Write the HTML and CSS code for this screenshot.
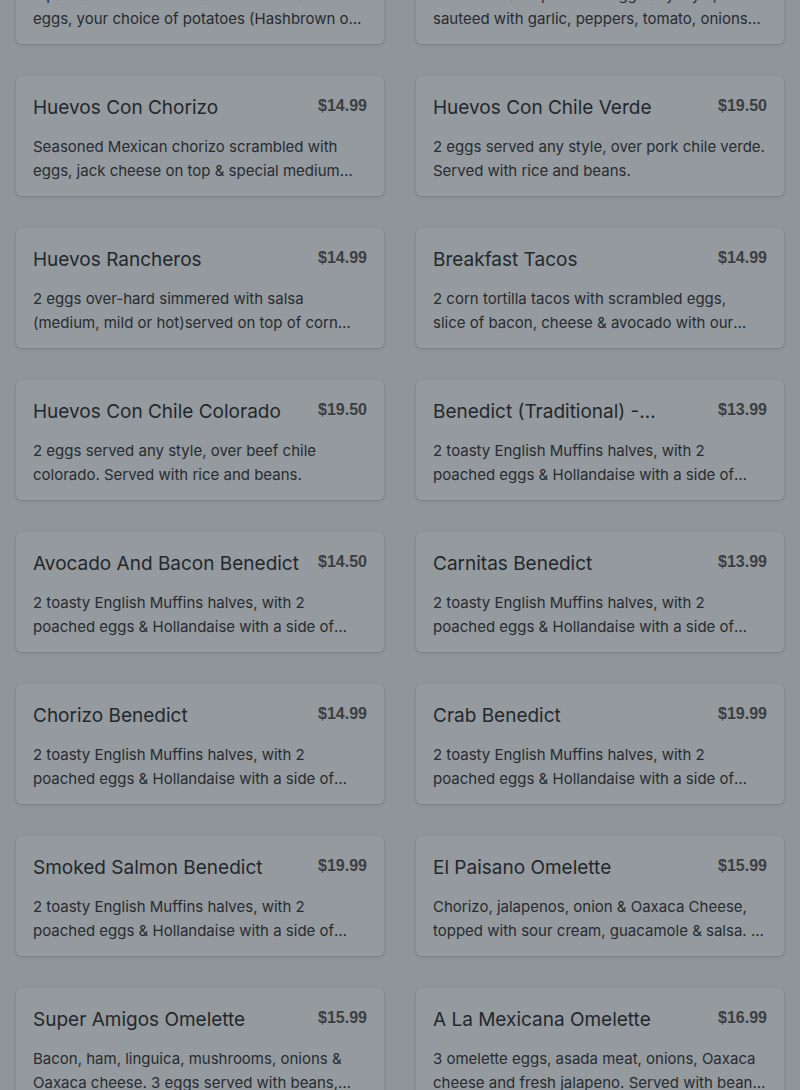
FILE: index.html
```html
<!DOCTYPE html>
<html lang="en">
<head>
    <meta charset="UTF-8">
    <meta name="viewport" content="width=device-width, initial-scale=1.0">
    <title>Breakfast Menu</title>
    <link rel="stylesheet" href="styles.css">
</head>
<body>
    <main class="menu">
        <div class="card">
            <div class="card-head">
                <h3 class="title">Breakfast Combo</h3>
                <span class="price">$13.99</span>
            </div>
            <p class="desc">2 pancakes or french toast with 2 scrambled eggs, your choice of potatoes (Hashbrown or home fries) and bacon or sausage.</p>
        </div>
        <div class="card">
            <div class="card-head">
                <h3 class="title">Chilaquiles</h3>
                <span class="price">$15.99</span>
            </div>
            <p class="desc">Corn tortilla chips with 2 eggs any style, sauteed with garlic, peppers, tomato, onions and our house salsa.</p>
        </div>

        <div class="card">
            <div class="card-head">
                <h3 class="title">Huevos Con Chorizo</h3>
                <span class="price">$14.99</span>
            </div>
            <p class="desc">Seasoned Mexican chorizo scrambled with eggs, jack cheese on top &amp; special medium salsa. Served with rice and beans.</p>
        </div>
        <div class="card">
            <div class="card-head">
                <h3 class="title">Huevos Con Chile Verde</h3>
                <span class="price">$19.50</span>
            </div>
            <p class="desc">2 eggs served any style, over pork chile verde. Served with rice and beans.</p>
        </div>

        <div class="card">
            <div class="card-head">
                <h3 class="title">Huevos Rancheros</h3>
                <span class="price">$14.99</span>
            </div>
            <p class="desc">2 eggs over-hard simmered with salsa (medium, mild or hot)served on top of corn tortillas. Served with rice and beans.</p>
        </div>
        <div class="card">
            <div class="card-head">
                <h3 class="title">Breakfast Tacos</h3>
                <span class="price">$14.99</span>
            </div>
            <p class="desc">2 corn tortilla tacos with scrambled eggs,<br>slice of bacon, cheese &amp; avocado with our house salsa.</p>
        </div>

        <div class="card">
            <div class="card-head">
                <h3 class="title">Huevos Con Chile Colorado</h3>
                <span class="price">$19.50</span>
            </div>
            <p class="desc">2 eggs served any style, over beef chile colorado. Served with rice and beans.</p>
        </div>
        <div class="card">
            <div class="card-head">
                <h3 class="title">Benedict (Traditional) - Canadian Bacon</h3>
                <span class="price">$13.99</span>
            </div>
            <p class="desc">2 toasty English Muffins halves, with 2 poached eggs &amp; Hollandaise with a side of potatoes.</p>
        </div>

        <div class="card">
            <div class="card-head">
                <h3 class="title">Avocado And Bacon Benedict</h3>
                <span class="price">$14.50</span>
            </div>
            <p class="desc">2 toasty English Muffins halves, with 2 poached eggs &amp; Hollandaise with a side of potatoes.</p>
        </div>
        <div class="card">
            <div class="card-head">
                <h3 class="title">Carnitas Benedict</h3>
                <span class="price">$13.99</span>
            </div>
            <p class="desc">2 toasty English Muffins halves, with 2 poached eggs &amp; Hollandaise with a side of potatoes.</p>
        </div>

        <div class="card">
            <div class="card-head">
                <h3 class="title">Chorizo Benedict</h3>
                <span class="price">$14.99</span>
            </div>
            <p class="desc">2 toasty English Muffins halves, with 2 poached eggs &amp; Hollandaise with a side of potatoes.</p>
        </div>
        <div class="card">
            <div class="card-head">
                <h3 class="title">Crab Benedict</h3>
                <span class="price">$19.99</span>
            </div>
            <p class="desc">2 toasty English Muffins halves, with 2 poached eggs &amp; Hollandaise with a side of potatoes.</p>
        </div>

        <div class="card">
            <div class="card-head">
                <h3 class="title">Smoked Salmon Benedict</h3>
                <span class="price">$19.99</span>
            </div>
            <p class="desc">2 toasty English Muffins halves, with 2 poached eggs &amp; Hollandaise with a side of potatoes.</p>
        </div>
        <div class="card">
            <div class="card-head">
                <h3 class="title">El Paisano Omelette</h3>
                <span class="price">$15.99</span>
            </div>
            <p class="desc">Chorizo, jalapenos, onion &amp; Oaxaca Cheese, topped with sour cream, guacamole &amp; salsa. 3 eggs served with beans, rice and tortillas.</p>
        </div>

        <div class="card">
            <div class="card-head">
                <h3 class="title">Super Amigos Omelette</h3>
                <span class="price">$15.99</span>
            </div>
            <p class="desc">Bacon, ham, linguica, mushrooms, onions &amp; Oaxaca cheese. 3 eggs served with beans, rice and tortillas.</p>
        </div>
        <div class="card">
            <div class="card-head">
                <h3 class="title">A La Mexicana Omelette</h3>
                <span class="price">$16.99</span>
            </div>
            <p class="desc">3 omelette eggs, asada meat, onions, Oaxaca cheese and fresh jalapeno. Served with beans, rice and tortillas.</p>
        </div>
    </main>
</body>
</html>
```

FILE: styles.css
```css
body {
    margin: 0;
    padding: 0;
    background-color: #8f9599;
    font-family: Inter, "Open Sans", sans-serif;
    color: #272c31;
    overflow: hidden;
}

.menu {
    display: grid;
    grid-template-columns: 1fr 1fr;
    gap: 32px;
    padding: 0 16px;
    margin-top: -76px;
}

.card {
    height: 120px;
    box-sizing: border-box;
    padding: 17px 17px 13px 17px;
    background-color: #959a9e;
    border-radius: 6px;
    box-shadow: 0 1px 3px rgba(40, 46, 52, 0.22);
}

.card-head {
    display: flex;
    align-items: flex-start;
    gap: 12px;
    margin-bottom: 12px;
}

.title {
    flex: 1;
    margin: 0;
    font-size: 19px;
    font-weight: 400;
    line-height: 30px;
    color: #23282d;
    display: -webkit-box;
    -webkit-line-clamp: 1;
    -webkit-box-orient: vertical;
    overflow: hidden;
}

.price {
    font-family: "Liberation Sans", Arial, sans-serif;
    font-size: 16px;
    font-weight: 700;
    line-height: 26px;
    color: #3a3f44;
}

.desc {
    margin: 0;
    font-size: 15px;
    line-height: 24px;
    display: -webkit-box;
    -webkit-line-clamp: 2;
    -webkit-box-orient: vertical;
    overflow: hidden;
}
```
